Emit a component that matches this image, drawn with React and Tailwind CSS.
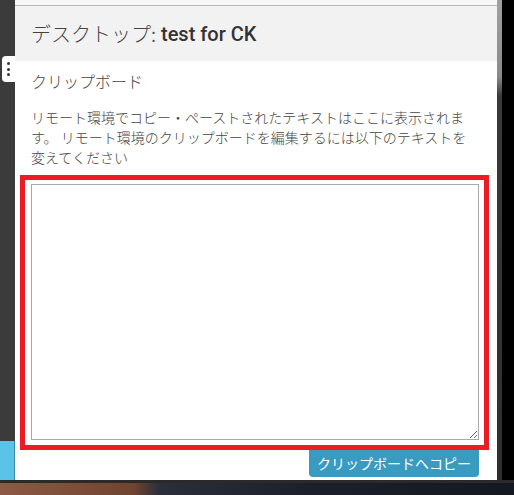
export default function App() {
  const jp = { fontFamily: '"Noto Sans CJK JP", "Noto Sans", sans-serif' };
  const title = { fontFamily: 'Roboto, "Noto Sans CJK JP", sans-serif' };

  return (
    <div className="relative flex h-[495px] w-[514px] flex-col overflow-hidden bg-black">
      <div className="flex h-[480px]">
        {/* left side bar */}
        <div className="flex w-[15px] flex-col">
          <div className="flex-1 bg-[#3b3b3b]" />
          <div className="h-[39px] border-r border-[#3d87a3] bg-[#5cc3e8]" />
        </div>

        {/* dialog */}
        <div className="flex w-[482px] flex-col bg-white">
          <div className="h-[6px] border-b border-[#b9b9b9] bg-[#f7f7f7]" />
          <div className="flex h-[55px] items-center bg-[#f2f2f2] px-[16px]" style={title}>
            <span className="text-[20px] font-light text-[#444]" style={jp}>デスクトップ:</span>
            <span className="ml-[5px] text-[20px] font-medium text-[#333]">test for CK</span>
          </div>

          <div className="flex flex-1 flex-col pt-[8px] pb-[3px]" style={jp}>
            <h3 className="px-[16px] text-[16px] leading-[24px] font-light text-[#444]">クリップボード</h3>
            <p className="mt-[14px] w-[462px] pl-[16px] text-[14px] leading-[20px] font-light text-[#444]">
              リモート環境でコピー・ペーストされたテキストはここに表示されます。 リモート環境のクリップボードを編集するには以下のテキストを変えてください
            </p>

            <div className="mt-[8px] ml-[5px] w-[469px] border-[5px] border-[#ed1c24] pt-[4px] pr-[5px] pb-[5px] pl-[6px]">
              <textarea className="block h-[256px] w-[448px] resize border border-[#a9a9a9] bg-white outline-none" />
            </div>

            <button
              type="button"
              className="mr-[18px] ml-auto h-[27px] w-[170px] rounded-b-[4px] bg-[#399bbf] text-[14px] leading-[27px] text-white"
            >
              クリップボードへコピー
            </button>
          </div>
        </div>

        {/* right edge */}
        <div className="flex w-[17px]">
          <div className="w-[5px] bg-[linear-gradient(180deg,#a0a0a0_0%,#8a8a8a_16%,#3a3a3a_20%,#2e2e2e_100%)]" />
          <div className="flex-1 bg-black" />
        </div>
      </div>

      {/* wallpaper strip */}
      <div className="h-[3px] bg-[#2a2a2a]" />
      <div className="h-[12px] bg-[linear-gradient(90deg,#8d5a44_0%,#70442f_26%,#2a2f3a_31%,#1b202a_60%,#141821_100%)]" />

      {/* side tab with dots */}
      <div className="absolute top-[56px] left-[2px] flex h-[26px] w-[13px] flex-col items-center justify-center gap-[2.5px] rounded-l-[4px] bg-white">
        <span className="h-[3px] w-[3px] rounded-full bg-[#333]" />
        <span className="h-[3px] w-[3px] rounded-full bg-[#333]" />
        <span className="h-[3px] w-[3px] rounded-full bg-[#333]" />
      </div>
    </div>
  );
}
